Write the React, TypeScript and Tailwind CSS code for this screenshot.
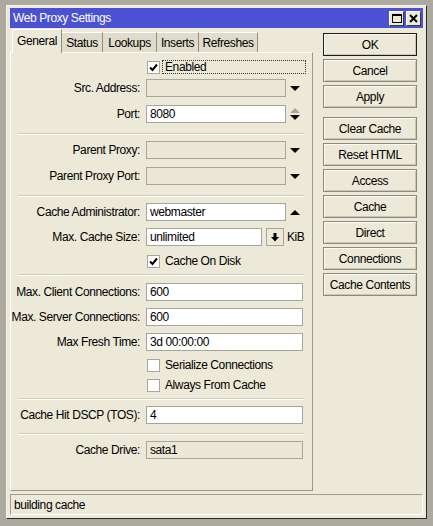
import React from "react";

const ink = "text-[#000]";

function DownArrow({ gray }: { gray?: boolean }) {
  return (
    <svg width="10" height="5" viewBox="0 0 10 5">
      <path d="M0 0h10L5 5z" fill={gray ? "#a8a69c" : "#000"} />
    </svg>
  );
}

function UpArrow({ gray }: { gray?: boolean }) {
  return (
    <svg width="10" height="5" viewBox="0 0 10 5">
      <path d="M0 5h10L5 0z" fill={gray ? "#a8a69c" : "#000"} />
    </svg>
  );
}

function Field({
  value,
  width,
  disabled,
}: {
  value?: string;
  width: string;
  disabled?: boolean;
}) {
  return (
    <div
      className={`${width} h-[18px] border border-[#a7a69d] ${
        disabled ? "bg-[#ebe8d7]" : "bg-white"
      } flex items-center whitespace-nowrap pl-[3px] leading-none`}
    >
      {value}
    </div>
  );
}

function Row({
  label,
  mt,
  children,
}: {
  label: string;
  mt: string;
  children: React.ReactNode;
}) {
  return (
    <div className={`${mt} flex h-[18px] items-center`}>
      <div className="flex w-[129px] shrink-0 justify-end">
        <span className="shrink-0 whitespace-nowrap leading-none">{label}</span>
      </div>
      <div className="ml-[6px] flex items-center">{children}</div>
    </div>
  );
}

function Check({
  label,
  checked,
  mt,
  focus,
}: {
  label: string;
  checked?: boolean;
  mt: string;
  focus?: boolean;
}) {
  return (
    <div className={`${mt} flex h-[14px] items-center pl-[136px]`}>
      <div className="flex h-[13px] w-[13px] items-center justify-center border border-[#a7a69d] bg-white">
        {checked && (
          <svg width="11" height="11" viewBox="0 0 11 11">
            <path d="M2 5.5 4.5 8 9 2.5" fill="none" stroke="#000" strokeWidth="2" />
          </svg>
        )}
      </div>
      <div
        className={`ml-[2px] flex h-[14px] items-center whitespace-nowrap pl-[2px] leading-none ${
          focus ? "w-[144px] border border-dotted border-[#333]" : "border border-transparent"
        }`}
      >
        {label}
      </div>
    </div>
  );
}

function Sep({ mt }: { mt: string }) {
  return <div className={`${mt} ml-[7px] w-[286px] border-t border-b border-t-[#cfccbb] border-b-white`} />;
}

function Btn({ label, mt, primary }: { label: string; mt?: string; primary?: boolean }) {
  return (
    <div
      className={`${mt ?? ""} flex h-[23px] w-[94px] items-center justify-center whitespace-nowrap border ${
        primary ? "border-[#1c1c1c]" : "border-[#8c8a80]"
      } bg-[#ece9d8] leading-none shadow-[inset_1px_1px_0_#fbfaf5,inset_-1px_-1px_0_#c9c6b5]`}
    >
      {label}
    </div>
  );
}

const tabs = [
  { name: "General", w: "w-[50px]" },
  { name: "Status", w: "w-[41px]" },
  { name: "Lookups", w: "w-[54px]" },
  { name: "Inserts", w: "w-[42px]" },
  { name: "Refreshes", w: "w-[59px]" },
];

export default function App() {
  return (
    <div
      className={`h-[526px] w-[433px] bg-[#acaa9e] pt-[5px] pl-[6px] font-['Liberation_Sans',Arial,sans-serif] text-[12px] tracking-[-0.4px] ${ink}`}
    >
      <div className="flex h-[514px] w-[421px] flex-col border border-t-[#f4f2ea] border-l-[#f4f2ea] border-r-[#2a2a2a] border-b-[#2a2a2a] bg-[#ece9d8] px-[3px] pt-[2px]">
        {/* title bar */}
        <div className="flex h-[20px] items-center justify-between bg-[#4b51d3] pl-[3px] pr-[2px]">
          <span className="leading-none text-white">Web Proxy Settings</span>
          <div className="flex gap-[2px]">
            <div className="flex h-[15px] w-[15px] items-center justify-center border border-t-white border-l-white border-r-[#3a3a3a] border-b-[#3a3a3a] bg-[#ece9d8]">
              <div className="h-[9px] w-[10px] border border-t-2 border-black" />
            </div>
            <div className="flex h-[15px] w-[15px] items-center justify-center border border-t-white border-l-white border-r-[#3a3a3a] border-b-[#3a3a3a] bg-[#ece9d8]">
              <svg width="9" height="9" viewBox="0 0 9 9">
                <path d="M1 1 8 8M8 1 1 8" stroke="#000" strokeWidth="2" />
              </svg>
            </div>
          </div>
        </div>

        {/* main */}
        <div className="flex h-[463px]">
          <div className="flex w-[303px] flex-col">
            <div className="relative z-10 flex h-[24px] items-end pl-[2px]">
              {tabs.map((t, i) =>
                i === 0 ? (
                  <div
                    key={t.name}
                    className={`${t.w} -mb-px flex h-[24px] items-center justify-center border-t border-l border-r border-t-white border-l-white border-r-[#8f8d83] bg-[#ece9d8] pb-[2px] leading-none`}
                  >
                    {t.name}
                  </div>
                ) : (
                  <div
                    key={t.name}
                    className={`${t.w} flex h-[20px] items-center justify-center border-t border-r border-t-white border-r-[#8f8d83] bg-[#dfdccb] leading-none`}
                  >
                    {t.name}
                  </div>
                )
              )}
            </div>
            <div className="flex h-[439px] flex-col border border-t-white border-l-white border-r-[#9a988d] border-b-[#9a988d]">
              <Check label="Enabled" checked mt="mt-[7px]" focus />
              <Row label="Src. Address:" mt="mt-[5px]">
                <Field width="w-[140px]" disabled />
                <div className="ml-[4px]">
                  <DownArrow />
                </div>
              </Row>
              <Row label="Port:" mt="mt-[8px]">
                <Field width="w-[140px]" value="8080" />
                <div className="ml-[4px] flex flex-col gap-[2px]">
                  <UpArrow gray />
                  <DownArrow />
                </div>
              </Row>
              <Sep mt="mt-[10px]" />
              <Row label="Parent Proxy:" mt="mt-[6px]">
                <Field width="w-[140px]" disabled />
                <div className="ml-[4px]">
                  <DownArrow />
                </div>
              </Row>
              <Row label="Parent Proxy Port:" mt="mt-[8px]">
                <Field width="w-[140px]" disabled />
                <div className="ml-[4px]">
                  <DownArrow />
                </div>
              </Row>
              <Sep mt="mt-[10px]" />
              <Row label="Cache Administrator:" mt="mt-[6px]">
                <Field width="w-[140px]" value="webmaster" />
                <div className="ml-[4px]">
                  <UpArrow />
                </div>
              </Row>
              <Row label="Max. Cache Size:" mt="mt-[7px]">
                <Field width="w-[116px]" value="unlimited" />
                <div className="ml-[4px] flex h-[18px] w-[18px] items-center justify-center border border-[#a7a69d] bg-[#ece9d8]">
                  <svg width="8" height="9" viewBox="0 0 8 9">
                    <path d="M2.5 0h3v4h-3z M0 4h8L4 8.5z" fill="#000" />
                  </svg>
                </div>
                <span className="ml-[3px] leading-none">KiB</span>
              </Row>
              <Check label="Cache On Disk" checked mt="mt-[8px]" />
              <Sep mt="mt-[6px]" />
              <Row label="Max. Client Connections:" mt="mt-[7px]">
                <Field width="w-[157px]" value="600" />
              </Row>
              <Row label="Max. Server Connections:" mt="mt-[7px]">
                <Field width="w-[157px]" value="600" />
              </Row>
              <Row label="Max Fresh Time:" mt="mt-[7px]">
                <Field width="w-[157px]" value="3d 00:00:00" />
              </Row>
              <Check label="Serialize Connections" mt="mt-[7px]" />
              <Check label="Always From Cache" mt="mt-[6px]" />
              <Sep mt="mt-[6px]" />
              <Row label="Cache Hit DSCP (TOS):" mt="mt-[6px]">
                <Field width="w-[157px]" value="4" />
              </Row>
              <Sep mt="mt-[9px]" />
              <Row label="Cache Drive:" mt="mt-[6px]">
                <Field width="w-[157px]" value="sata1" disabled />
              </Row>
            </div>
          </div>

          <div className="ml-[10px] flex flex-col pt-[5px]">
            <Btn label="OK" primary />
            <Btn label="Cancel" mt="mt-[3px]" />
            <Btn label="Apply" mt="mt-[3px]" />
            <Btn label="Clear Cache" mt="mt-[9px]" />
            <Btn label="Reset HTML" mt="mt-[3px]" />
            <Btn label="Access" mt="mt-[3px]" />
            <Btn label="Cache" mt="mt-[3px]" />
            <Btn label="Direct" mt="mt-[3px]" />
            <Btn label="Connections" mt="mt-[3px]" />
            <Btn label="Cache Contents" mt="mt-[3px]" />
          </div>
        </div>

        {/* status bar */}
        <div className="mt-[3px] flex h-[21px] items-center border border-t-[#a09e94] border-l-[#a09e94] border-r-white border-b-white pl-[3px] leading-none">
          building cache
        </div>
      </div>
    </div>
  );
}
